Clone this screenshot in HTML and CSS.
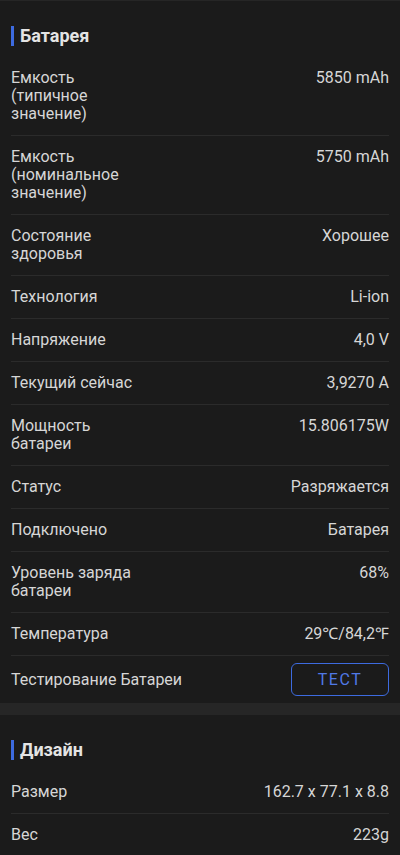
FILE: index.html
```html
<!DOCTYPE html>
<html lang="ru">
<head>
    <meta charset="UTF-8">
    <meta name="viewport" content="width=device-width, initial-scale=1.0">
    <title>Батарея</title>
    <link rel="stylesheet" href="styles.css">
</head>
<body>

    <div class="section">
        <h2 class="section-title">Батарея</h2>
        <div class="row"><div class="label">Емкость<br>(типичное<br>значение)</div><div class="value">5850 mAh</div></div>
        <div class="row"><div class="label">Емкость<br>(номинальное<br>значение)</div><div class="value">5750 mAh</div></div>
        <div class="row"><div class="label">Состояние<br>здоровья</div><div class="value">Хорошее</div></div>
        <div class="row"><div class="label">Технология</div><div class="value">Li-ion</div></div>
        <div class="row"><div class="label">Напряжение</div><div class="value">4,0 V</div></div>
        <div class="row"><div class="label">Текущий сейчас</div><div class="value">3,9270 A</div></div>
        <div class="row"><div class="label">Мощность<br>батареи</div><div class="value">15.806175W</div></div>
        <div class="row"><div class="label">Статус</div><div class="value">Разряжается</div></div>
        <div class="row"><div class="label">Подключено</div><div class="value">Батарея</div></div>
        <div class="row"><div class="label">Уровень заряда<br>батареи</div><div class="value">68%</div></div>
        <div class="row"><div class="label">Температура</div><div class="value">29℃/84,2℉</div></div>
        <div class="row row-button">
            <div class="label">Тестирование Батареи</div>
            <button class="test-button">ТЕСТ</button>
        </div>
    </div>

    <div class="section">
        <h2 class="section-title">Дизайн</h2>
        <div class="row"><div class="label">Размер</div><div class="value">162.7 x 77.1 x 8.8</div></div>
        <div class="row"><div class="label">Вес</div><div class="value">223g</div></div>
    </div>

</body>
</html>
```

FILE: styles.css
```css
body {
    margin: 0;
    background-color: #1b1b1b;
    font-family: Roboto, "Noto Sans", sans-serif;
    color: #d6d6d6;
    border-top: 1px solid #262626;
}
.section {
    padding: 0 11px;
}
.section + .section {
    border-top: 12px solid #262626;
}
.section-title {
    display: flex;
    align-items: center;
    gap: 6px;
    margin: 0;
    padding: 24px 0 11px;
    font-size: 18px;
    line-height: 21px;
    font-weight: bold;
    color: #e4e4e4;
}
.section-title::before {
    content: "";
    width: 3px;
    height: 20px;
    background-color: #3d6be0;
}
.row {
    display: flex;
    justify-content: space-between;
    align-items: flex-start;
    padding: 12px 0;
    font-size: 16px;
    line-height: 18px;
    border-bottom: 1px solid #2b2b2b;
}
.section:last-child .row:last-child {
    border-bottom: none;
}
.value {
    text-align: right;
}
.row-button {
    align-items: center;
    padding: 7px 0;
    border-bottom: none;
}
.test-button {
    width: 98px;
    height: 33px;
    background: none;
    border: 1.5px solid #3d6be0;
    border-radius: 6px;
    color: #5079e6;
    font-family: Roboto, "Noto Sans", sans-serif;
    font-size: 16px;
    letter-spacing: 1.5px;
}
```
